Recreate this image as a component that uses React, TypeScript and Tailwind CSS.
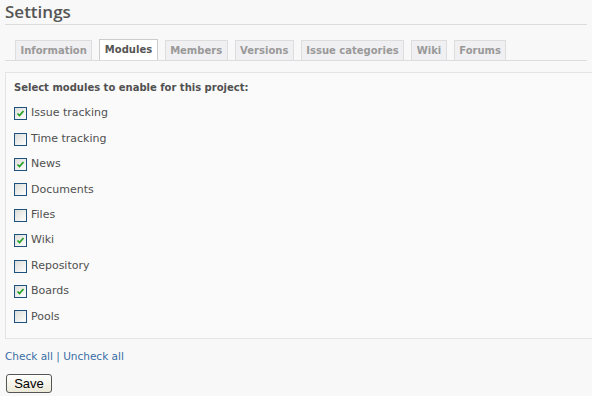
import React, { useState } from "react";

const tabs = ["Information", "Modules", "Members", "Versions", "Issue categories", "Wiki", "Forums"];

const initialModules = [
  { name: "Issue tracking", on: true },
  { name: "Time tracking", on: false },
  { name: "News", on: true },
  { name: "Documents", on: false },
  { name: "Files", on: false },
  { name: "Wiki", on: true },
  { name: "Repository", on: false },
  { name: "Boards", on: true },
  { name: "Pools", on: false },
];

function Box({ checked }: { checked: boolean }) {
  return (
    <span className="w-[13px] h-[13px] border border-[#1c5180] bg-gradient-to-br from-[#dcdcd7] to-white flex items-center justify-center shrink-0">
      {checked && (
        <svg width="9" height="9" viewBox="0 0 9 9">
          <path d="M1.5 4.5 L3.5 6.5 L7.5 2" fill="none" stroke="#21a121" strokeWidth="1.7" />
        </svg>
      )}
    </span>
  );
}

export default function App() {
  const [modules, setModules] = useState(initialModules);

  const setAll = (on: boolean) => setModules(modules.map((m) => ({ ...m, on })));

  return (
    <div className="w-[592px] h-[396px] bg-[#f8f8f8] text-[#505050] overflow-hidden font-['DejaVu_Sans',sans-serif] text-[11px]">
      {/* Header */}
      <h2 className="mx-[5px] pt-[2px] pb-[2px] text-[17px] font-semibold leading-[20px] text-[#555] font-['Open_Sans',sans-serif] border-b border-[#dcdcdc]">
        Settings
      </h2>

      {/* Tabs */}
      <div className="mt-[15px] mx-[5px] flex items-end gap-[7px] pl-[10px] border-b border-[#ddd] h-[21px] text-[10px]">
        {tabs.map((tab) => (
          <div
            key={tab}
            className={`px-[4.5px] h-[20px] leading-[19px] border border-b-0 font-bold ${
              tab === "Modules"
                ? "bg-white border-[#ccc] text-[#555] h-[21px]"
                : "bg-[#f0eff2] border-[#ddd] text-[#999]"
            }`}
          >
            {tab}
          </div>
        ))}
      </div>

      {/* Modules box */}
      <div className="mt-[11px] ml-[5px] border border-r-0 border-[#e4e4e4] bg-[#fafafa] pl-[8px] pt-[7px] h-[267px]">
        <p className="font-bold text-[10px] text-[#505050] mb-[6px]">Select modules to enable for this project:</p>
        <div className="flex flex-col">
          {modules.map((m, i) => (
            <label key={m.name} className="flex items-center gap-[4px] h-[25.4px] cursor-pointer">
              <span
                onClick={() =>
                  setModules(modules.map((x, j) => (j === i ? { ...x, on: !x.on } : x)))
                }
              >
                <Box checked={m.on} />
              </span>
              {m.name}
            </label>
          ))}
        </div>
      </div>

      {/* Links */}
      <p className="mt-[10px] ml-[5px] text-[10.5px] text-[#3a6ea5]">
        <a className="cursor-pointer" onClick={() => setAll(true)}>Check all</a>
        {" | "}
        <a className="cursor-pointer" onClick={() => setAll(false)}>Uncheck all</a>
      </p>

      <button className="mt-[9px] ml-[6px] w-[46px] h-[19px] border border-[#555] rounded-[3px] bg-gradient-to-b from-white to-[#ece9d8] text-black font-['Liberation_Sans',sans-serif] text-[13px] leading-[17px]">
        Save
      </button>
    </div>
  );
}
